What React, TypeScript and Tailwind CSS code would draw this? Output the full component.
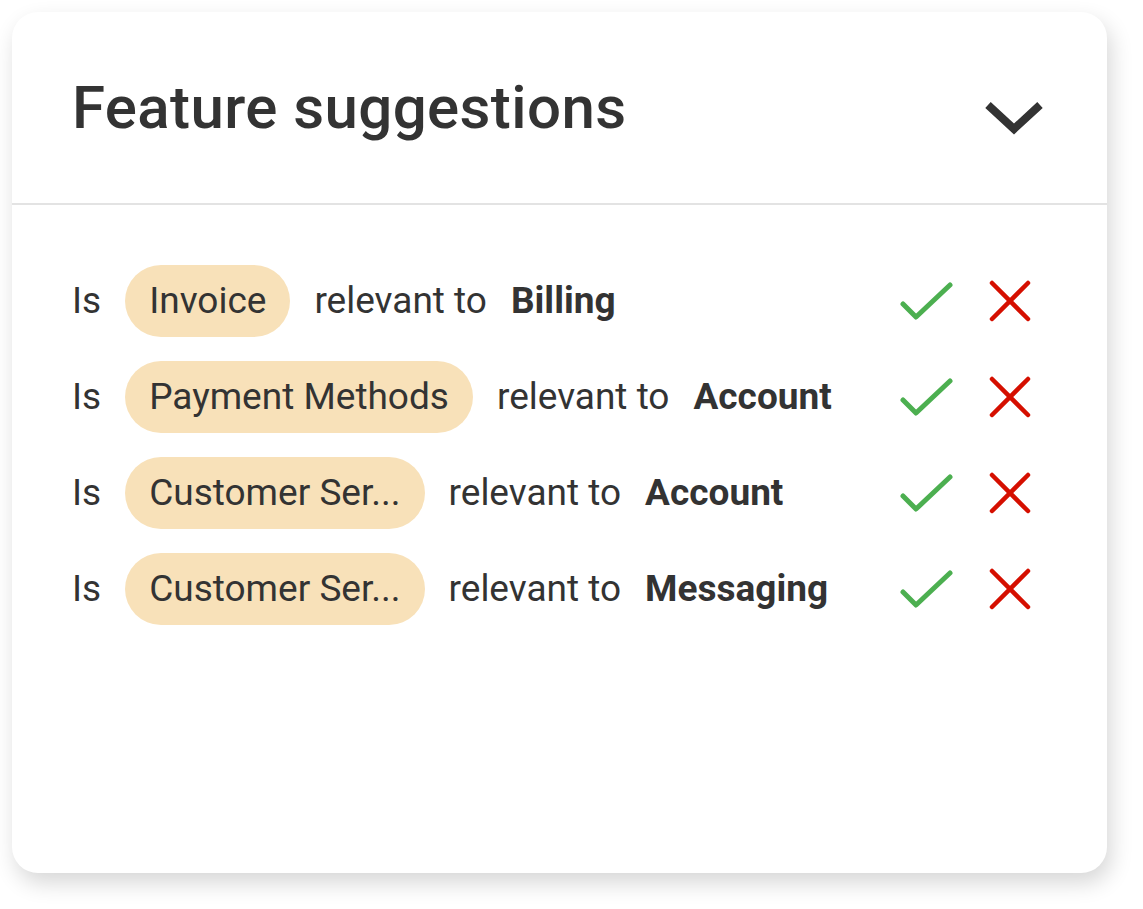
import React from "react";

// ── Types ──────────────────────────────────────────────
interface SuggestionRowProps {
  feature: string;
  target: string;
}

// ── Sub-components ─────────────────────────────────────

function CheckIcon() {
  return (
    <svg width="54" height="40" viewBox="0 0 54 40" fill="none" stroke="#4caf50" strokeWidth="5" strokeLinecap="round" strokeLinejoin="round">
      <polyline points="4,23 17,36 51,4" />
    </svg>
  );
}

function CrossIcon() {
  return (
    <svg width="42" height="42" viewBox="0 0 42 42" fill="none" stroke="#d50f00" strokeWidth="4.5" strokeLinecap="round">
      <line x1="3" y1="3" x2="39" y2="39" />
      <line x1="39" y1="3" x2="3" y2="39" />
    </svg>
  );
}

function SuggestionRow({ feature, target }: SuggestionRowProps) {
  return (
    <div className="flex items-center h-[72px]">
      <div className="flex-1 flex items-center gap-[24px] text-[37px] text-[#333333] whitespace-nowrap">
        <span>Is</span>
        <span className="h-[72px] flex items-center px-[24px] rounded-full bg-[#f8e1b9]">{feature}</span>
        <span>relevant to</span>
        <span className="font-bold">{target}</span>
      </div>
      <div className="flex items-center gap-[36px] pr-[12px]">
        <CheckIcon />
        <CrossIcon />
      </div>
    </div>
  );
}

// ── Page ───────────────────────────────────────────────
export default function App() {
  return (
    <div className="w-[1143px] h-[909px] bg-white pt-[12px] pl-[12px]" style={{ fontFamily: "Roboto, 'Noto Sans', sans-serif" }}>
      <div className="w-[1095px] h-[861px] bg-white rounded-[26px] shadow-[4px_10px_22px_rgba(0,0,0,0.16)] overflow-hidden">

        {/* Header */}
        <div className="h-[193px] flex items-center justify-between pl-[60px] pr-[64px] border-b-2 border-[#e3e3e3]">
          <h1 className="text-[60px] font-medium text-[#333333] tracking-[0.4px]">Feature suggestions</h1>
          <svg className="mt-[24px]" width="58" height="36" viewBox="0 0 58 36" fill="none" stroke="#333333" strokeWidth="8">
            <polyline points="3,3 29,27 55,3" />
          </svg>
        </div>

        {/* Rows */}
        <div className="pt-[60px] pl-[60px] pr-[64px] flex flex-col gap-[24px]">
          <SuggestionRow feature="Invoice" target="Billing" />
          <SuggestionRow feature="Payment Methods" target="Account" />
          <SuggestionRow feature="Customer Ser..." target="Account" />
          <SuggestionRow feature="Customer Ser..." target="Messaging" />
        </div>

      </div>
    </div>
  );
}
